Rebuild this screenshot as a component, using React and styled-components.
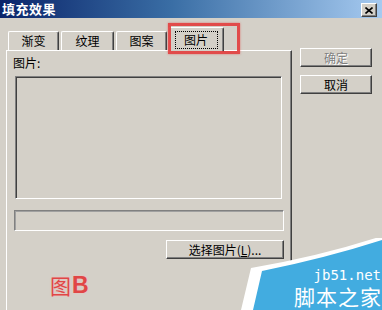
import React from 'react'
import styled, { createGlobalStyle } from 'styled-components';

const GlobalStyle = createGlobalStyle`
  body{
    margin:0;
    font-family:"Noto Sans CJK SC","DejaVu Sans",sans-serif;
  }
`

const Window = styled.div`
  width:382px;
  height:310px;
  background-color:#d4d0c8;
  position:relative;
  overflow:hidden;
  font-size:12px;
  color:#000;
`
const TitleBar = styled.div`
  height:18px;
  display:flex;
  align-items:center;
  justify-content:space-between;
  padding:0 5px 0 2px;
  background:linear-gradient(to right,#0a246a 0%,#3a6ea5 45%,#a6caf0 100%);
`
const Title = styled.span`
  color:#fff;
  font-weight:700;
  font-size:13px;
  line-height:18px;
  letter-spacing:0.5px;
`
const CloseButton = styled.div`
  width:14px;
  height:12px;
  margin-top:2px;
  display:flex;
  align-items:center;
  justify-content:center;
  background-color:#d4d0c8;
  border:1px solid;
  border-color:#fff #404040 #404040 #fff;
  box-shadow:inset -1px -1px #808080;
`
const Body = styled.div`
  display:flex;
  padding:9px 0 0 6px;
`
const TabControl = styled.div`
  width:286px;
  display:flex;
  flex-direction:column;
`
const TabStrip = styled.div`
  height:23px;
  display:flex;
  align-items:flex-end;
  gap:2px;
  padding-left:2px;
  position:relative;
  z-index:2;
`
const Tab = styled.div`
  width:${p => p.$w}px;
  height:${p => p.$active ? 25 : 19}px;
  margin-bottom:${p => p.$active ? -2 : 0}px;
  margin-left:${p => p.$active ? -1 : 0}px;
  box-sizing:border-box;
  display:flex;
  align-items:${p => p.$active ? 'flex-start' : 'center'};
  padding-top:${p => p.$active ? 3 : 0}px;
  justify-content:center;
  background-color:#d4d0c8;
  border-top:1px solid #fff;
  border-left:1px solid #fff;
  border-right:1px solid #404040;
  border-radius:2px 2px 0 0;
  box-shadow:inset -1px 0 #808080;
  line-height:14px;
`
const FocusRing = styled.span`
  width:43px;
  height:18px;
  box-sizing:border-box;
  border:1px dotted #000;
  display:flex;
  align-items:center;
  justify-content:center;
`
const Panel = styled.div`
  height:260px;
  box-sizing:border-box;
  border-top:1px solid #fff;
  border-left:1px solid #fff;
  border-right:1px solid #404040;
  box-shadow:inset -1px 0 #808080;
  padding:5px 9px 0 8px;
  display:flex;
  flex-direction:column;
  position:relative;
`
const Label = styled.div`
  line-height:14px;
  margin-left:-2px;
`
const PictureBox = styled.div`
  height:123px;
  margin-top:6px;
  box-sizing:border-box;
  border:1px solid;
  border-color:#808080 #fff #fff #808080;
  box-shadow:inset 1px 1px #404040, inset -1px -1px #d4d0c8;
`
const Field = styled.div`
  height:21px;
  margin:11px -2px 0 -1px;
  box-sizing:border-box;
  border:1px solid;
  border-color:#808080 #fff #fff #808080;
  box-shadow:inset 1px 1px #a0a0a0;
`
const ButtonRow = styled.div`
  display:flex;
  justify-content:flex-end;
  margin:9px -2px 0 0;
`
const Button = styled.div`
  width:${p => p.$w || 72}px;
  height:19px;
  box-sizing:border-box;
  display:flex;
  align-items:center;
  justify-content:center;
  background-color:#d4d0c8;
  border:1px solid;
  border-color:#fff #404040 #404040 #fff;
  box-shadow:inset -1px -1px #808080;
  color:${p => p.$disabled ? '#808080' : '#000'};
  text-shadow:${p => p.$disabled ? '1px 1px #fff' : 'none'};
  line-height:14px;
`
const Side = styled.div`
  display:flex;
  flex-direction:column;
  gap:8px;
  margin-left:8px;
  padding-top:21px;
`
const Underline = styled.span`
  text-decoration:underline;
`
const Mark = styled.div`
  position:absolute;
  left:168px;
  top:23px;
  width:72px;
  height:31px;
  box-sizing:border-box;
  border:3px solid rgba(226,60,60,0.9);
  box-shadow:0 0 2px rgba(226,60,60,0.6);
  z-index:5;
`
const Caption = styled.div`
  position:absolute;
  left:50px;
  top:272px;
  display:flex;
  align-items:center;
  color:#e04646;
  font-size:21px;
  line-height:26px;
  text-shadow:0 0 2px #f5b8b8;
`
const CaptionLetter = styled.span`
  font-family:"Liberation Sans",Arial,sans-serif;
  font-weight:700;
  font-size:23px;
  margin-left:1px;
`
const Watermark = styled.div`
  position:absolute;
  right:0;
  bottom:0;
  width:141px;
  height:72px;
  svg{
    position:absolute;
    left:0;
    top:0;
  }
`
const WmSite = styled.span`
  position:absolute;
  right:1px;
  top:30px;
  color:#fff;
  font-family:"DejaVu Sans Mono",monospace;
  font-size:14px;
  line-height:14px;
`
const WmName = styled.span`
  position:absolute;
  right:0;
  top:47px;
  color:#fff;
  font-size:21px;
  line-height:23px;
  letter-spacing:1px;
`

const tabs = [
  { name: '渐变', w: 51 },
  { name: '纹理', w: 53 },
  { name: '图案', w: 51 },
]

const App = () => {
  return (
    <Window>
      <GlobalStyle />
      <TitleBar>
        <Title>填充效果</Title>
        <CloseButton>
          <svg width="8" height="7" viewBox="0 0 8 7">
            <path d="M0.5 0.5 L7.5 6.5 M7.5 0.5 L0.5 6.5" stroke="#000" strokeWidth="1.6" />
          </svg>
        </CloseButton>
      </TitleBar>
      <Body>
        <TabControl>
          <TabStrip>
            {tabs.map(t => <Tab key={t.name} $w={t.w}>{t.name}</Tab>)}
            <Tab $w={56} $active><FocusRing>图片</FocusRing></Tab>
          </TabStrip>
          <Panel>
            <Label>图片:</Label>
            <PictureBox />
            <Field />
            <ButtonRow>
              <Button $w={118}>选择图片(<Underline>L</Underline>)...</Button>
            </ButtonRow>
          </Panel>
        </TabControl>
        <Side>
          <Button $disabled>确定</Button>
          <Button>取消</Button>
        </Side>
      </Body>
      <Mark />
      <Caption>图<CaptionLetter>B</CaptionLetter></Caption>
      <Watermark>
        <svg width="141" height="72" viewBox="0 0 141 72">
          <path d="M10 30 Q80 18 141 -2 L141 72 L0 72 Z" fill="#fff" />
          <path d="M21 33 Q85 20 141 2 L141 72 L12 72 Z" fill="#42ace0" />
        </svg>
        <WmSite>jb51.net</WmSite>
        <WmName>脚本之家</WmName>
      </Watermark>
    </Window>
  )
}

export default App
